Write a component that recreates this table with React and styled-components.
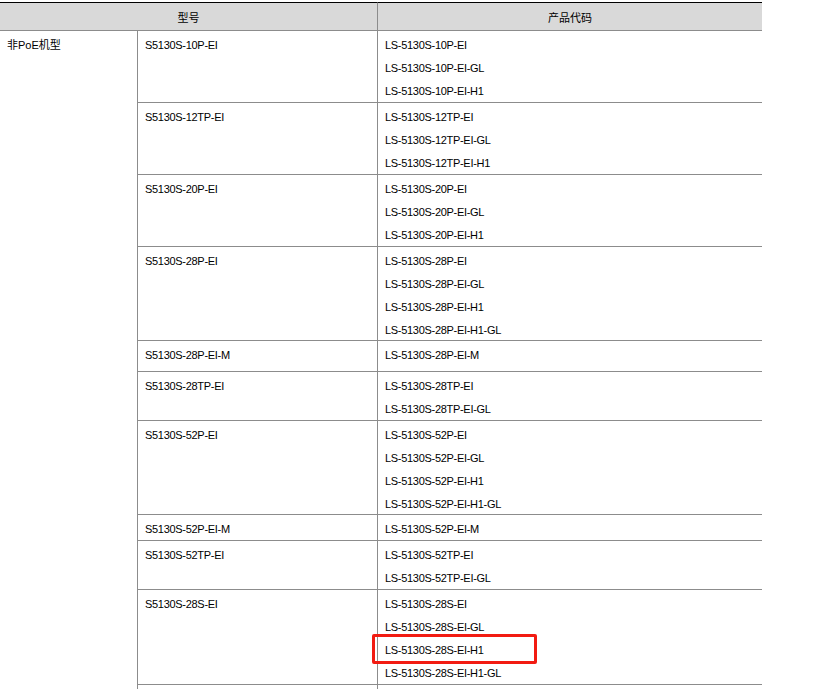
import React from "react";
import styled, { createGlobalStyle } from "styled-components";

const Global = createGlobalStyle`
  html, body { margin: 0; padding: 0; background: #fff; }
  body {
    font-family: "Liberation Sans", Arial, "Noto Sans CJK SC", sans-serif;
    font-size: 11px;
    color: #000;
  }
`;

const Page = styled.div`
  padding-top: 2px;
  width: 831px;
  height: 687px;
  overflow: hidden;
`;

const Grid = styled.div`
  display: grid;
  width: 762px;
  grid-template-columns: 137px 240px 385px;
  align-items: stretch;
`;

const HeadCell = styled.div`
  box-sizing: border-box;
  height: 29px;
  grid-column: ${(p) => p.$span};
  background: #d9d9d9;
  border-top: 1px solid #000;
  border-bottom: 1px solid #8c8c8c;
  border-left: ${(p) => (p.$divider ? "1px solid #8c8c8c" : "none")};
  display: flex;
  align-items: center;
  justify-content: center;
  font-family: "Noto Sans CJK SC", "Liberation Sans", sans-serif;
  font-size: 11px;
  padding-top: 1px;
`;

const GroupCell = styled.div`
  grid-column: 1;
  grid-row: 2 / span ${(p) => p.$rows};
  padding: 7px 0 0 7px;
  font-family: "Liberation Sans", "Noto Sans CJK SC", sans-serif;
  font-size: 11px;
  line-height: 15px;
`;

const Cell = styled.div`
  box-sizing: border-box;
  grid-column: ${(p) => p.$col};
  border-left: 1px solid #8c8c8c;
  border-bottom: 1px solid #8c8c8c;
  padding: 3px 0 0 7px;
  height: ${(p) => p.$h}px;
`;

const Line = styled.div`
  position: relative;
  height: 23px;
  line-height: 23px;
  letter-spacing: -0.3px;
  white-space: nowrap;
`;

const Highlight = styled.span`
  position: absolute;
  left: -13px;
  top: -5px;
  width: 159px;
  height: 24px;
  border: 3px solid #f21b12;
  border-radius: 2px;
  pointer-events: none;
`;

const rows = [
  { model: "S5130S-10P-EI", h: 72, codes: ["LS-5130S-10P-EI", "LS-5130S-10P-EI-GL", "LS-5130S-10P-EI-H1"] },
  { model: "S5130S-12TP-EI", h: 72, codes: ["LS-5130S-12TP-EI", "LS-5130S-12TP-EI-GL", "LS-5130S-12TP-EI-H1"] },
  { model: "S5130S-20P-EI", h: 72, codes: ["LS-5130S-20P-EI", "LS-5130S-20P-EI-GL", "LS-5130S-20P-EI-H1"] },
  { model: "S5130S-28P-EI", h: 94, codes: ["LS-5130S-28P-EI", "LS-5130S-28P-EI-GL", "LS-5130S-28P-EI-H1", "LS-5130S-28P-EI-H1-GL"] },
  { model: "S5130S-28P-EI-M", h: 31, codes: ["LS-5130S-28P-EI-M"] },
  { model: "S5130S-28TP-EI", h: 49, codes: ["LS-5130S-28TP-EI", "LS-5130S-28TP-EI-GL"] },
  { model: "S5130S-52P-EI", h: 94, codes: ["LS-5130S-52P-EI", "LS-5130S-52P-EI-GL", "LS-5130S-52P-EI-H1", "LS-5130S-52P-EI-H1-GL"] },
  { model: "S5130S-52P-EI-M", h: 26, codes: ["LS-5130S-52P-EI-M"] },
  { model: "S5130S-52TP-EI", h: 49, codes: ["LS-5130S-52TP-EI", "LS-5130S-52TP-EI-GL"] },
  { model: "S5130S-28S-EI", h: 95, codes: ["LS-5130S-28S-EI", "LS-5130S-28S-EI-GL", "LS-5130S-28S-EI-H1", "LS-5130S-28S-EI-H1-GL"], highlight: 2 },
];

export default function App() {
  return (
    <Page>
      <Global />
      <Grid>
        <HeadCell $span="1 / 3">型号</HeadCell>
        <HeadCell $span="3" $divider>产品代码</HeadCell>
        <GroupCell $rows={rows.length + 1}>非PoE机型</GroupCell>
        {rows.map((r) => (
          <React.Fragment key={r.model}>
            <Cell $col={2} $h={r.h}>
              <Line>{r.model}</Line>
            </Cell>
            <Cell $col={3} $h={r.h}>
              {r.codes.map((c, i) => (
                <Line key={c}>
                  {c}
                  {r.highlight === i && <Highlight />}
                </Line>
              ))}
            </Cell>
          </React.Fragment>
        ))}
        <Cell $col={2} $h={8} />
        <Cell $col={3} $h={8} />
      </Grid>
    </Page>
  );
}
